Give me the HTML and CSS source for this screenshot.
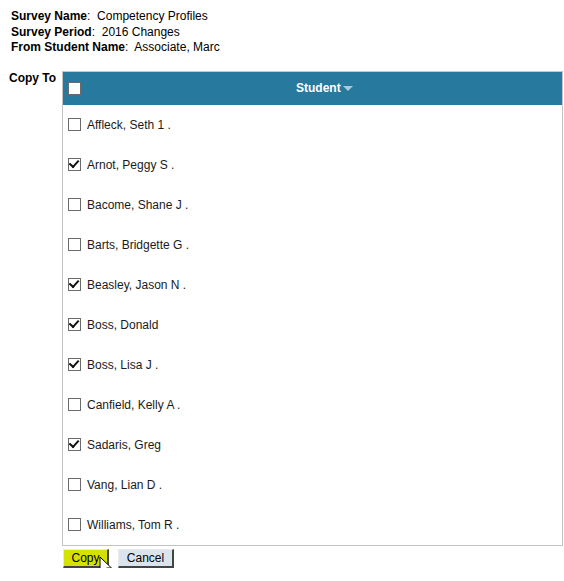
FILE: index.html
```html
<!DOCTYPE html>
<html>
<head>
<meta charset="utf-8">
<link rel="stylesheet" href="styles.css">
</head>
<body>
<div class="info">
  <div><b>Survey Name</b>:&nbsp; Competency Profiles</div>
  <div><b>Survey Period</b>:&nbsp; 2016 Changes</div>
  <div><b>From Student Name</b>:&nbsp; Associate, Marc</div>
</div>
<div class="copyto">
  <div class="label">Copy To</div>
  <div class="panel">
    <table class="grid">
      <thead>
        <tr>
          <th class="chk"><span class="cb"></span></th>
          <th class="name">Student <span class="arrow"></span></th>
        </tr>
      </thead>
      <tbody>
        <tr><td class="chk"><span class="cb"></span></td><td>Affleck, Seth 1 .</td></tr>
        <tr><td class="chk"><span class="cb on"></span></td><td>Arnot, Peggy S .</td></tr>
        <tr><td class="chk"><span class="cb"></span></td><td>Bacome, Shane J .</td></tr>
        <tr><td class="chk"><span class="cb"></span></td><td>Barts, Bridgette G .</td></tr>
        <tr><td class="chk"><span class="cb on"></span></td><td>Beasley, Jason N .</td></tr>
        <tr><td class="chk"><span class="cb on"></span></td><td>Boss, Donald</td></tr>
        <tr><td class="chk"><span class="cb on"></span></td><td>Boss, Lisa J .</td></tr>
        <tr><td class="chk"><span class="cb"></span></td><td>Canfield, Kelly A .</td></tr>
        <tr><td class="chk"><span class="cb on"></span></td><td>Sadaris, Greg</td></tr>
        <tr><td class="chk"><span class="cb"></span></td><td>Vang, Lian D .</td></tr>
        <tr><td class="chk"><span class="cb"></span></td><td>Williams, Tom R .</td></tr>
      </tbody>
    </table>
    <div class="buttons">
      <span class="btnwrap">
        <button class="btn copy">Copy</button>
        <svg class="cursor" width="14" height="22" viewBox="0 0 14 22"><path d="M1 1 L1 17 L5 13 L8 20 L10.5 19 L7.5 12 L12.5 12 Z" fill="#fff" stroke="#000" stroke-width="1" stroke-linejoin="miter"/></svg>
      </span>
      <button class="btn cancel">Cancel</button>
    </div>
  </div>
</div>
</body>
</html>
```
FILE: styles.css
```css
html, body {
  margin: 0;
  padding: 0;
  background: #fff;
}
body {
  font-family: "Liberation Sans", Arial, sans-serif;
  font-size: 12px;
  color: #000;
  padding: 9px 0 0 9px;
}
.info {
  padding-left: 2px;
  line-height: 15.5px;
}
.info b {
  font-weight: bold;
}
.copyto {
  display: flex;
  align-items: flex-start;
  margin-top: 15px;
}
.label {
  font-weight: bold;
  width: 53px;
  line-height: 14px;
}
.panel {
  width: 501px;
}
.grid {
  width: 501px;
  border-collapse: collapse;
  border: 1px solid #c3c3c3;
  border-top-color: #c8c8c8;
}
.grid th {
  background: #27799d;
  color: #fff;
  height: 33px;
  padding: 0;
  font-weight: bold;
  vertical-align: middle;
}
.grid th.name {
  text-align: center;
}
.arrow {
  display: inline-block;
  width: 0;
  height: 0;
  border-left: 5px solid transparent;
  border-right: 5px solid transparent;
  border-top: 5px solid #a9cbdc;
  vertical-align: middle;
  margin-left: -1px;
}
.grid td {
  height: 40px;
  padding: 0;
  vertical-align: middle;
  color: #1a1a1a;
  font-size: 12px;
}
.grid .chk {
  width: 19px;
  padding-left: 5px;
}
.cb {
  display: block;
  width: 11px;
  height: 11px;
  border: 1px solid #6b6b6b;
  background: #fff;
  position: relative;
}
.cb.on::after {
  content: "";
  position: absolute;
  left: 1px;
  top: 0px;
  width: 7px;
  height: 4px;
  border-left: 2px solid #111;
  border-bottom: 2px solid #111;
  transform: translate(0px, 2px) rotate(-48deg) scaleX(1.05);
  transform-origin: 3px 3px;
}
.buttons {
  display: flex;
  gap: 9px;
  margin-top: 3px;
  padding-left: 1px;
}
.btnwrap {
  position: relative;
  display: inline-block;
}
.btn {
  font-family: "Liberation Sans", Arial, sans-serif;
  font-size: 12px;
  height: 19px;
  padding: 0 4px;
  margin: 0;
  border: 1px solid;
  border-color: #eaeaea #444 #444 #eaeaea;
  border-width: 1px 2px 2px 1px;
  color: #000;
  line-height: 14px;
}
.copy {
  background: #d5e200;
  width: 46px;
}
.cancel {
  background: #d9e4ee;
  width: 56px;
}
.cursor {
  position: absolute;
  left: 36px;
  top: 7px;
}
```
